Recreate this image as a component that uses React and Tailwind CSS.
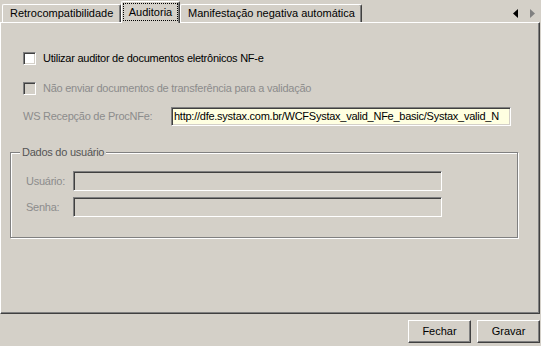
const raised =
  "border-t border-l border-t-white border-l-white border-r border-b border-r-[#404040] border-b-[#404040] shadow-[inset_-1px_-1px_0_#808080]";
const sunken =
  "border-t border-l border-t-[#808080] border-l-[#808080] border-r border-b border-r-white border-b-white shadow-[inset_1px_1px_0_#404040,inset_-1px_-1px_0_#d4d0c8]";

function Tab({ label, active, width }) {
  if (active) {
    return (
      <div
        className={`relative z-10 -mb-px flex h-[22px] items-start justify-center rounded-t-[2px] border-t border-l border-t-white border-l-white border-r border-r-[#404040] bg-[#d4d0c8] pt-[2px] shadow-[inset_-1px_0_0_#808080] ${width}`}
      >
        <span className="px-[5px] leading-[16px] outline-1 outline-dotted outline-black">{label}</span>
      </div>
    );
  }
  return (
    <div
      className={`flex h-[18px] items-center rounded-t-[2px] border-t border-l border-t-white border-l-white border-r border-r-[#404040] bg-[#d4d0c8] pl-[7px] shadow-[inset_-1px_0_0_#808080] ${width}`}
    >
      {label}
    </div>
  );
}

function Checkbox({ label, disabled }) {
  return (
    <label className="flex items-center gap-[7px]">
      <span className={`h-[13px] w-[13px] ${sunken} ${disabled ? "bg-[#d4d0c8]" : "bg-white"}`} />
      <span className={disabled ? "text-[#8c8c8c]" : "text-black"}>{label}</span>
    </label>
  );
}

function Field({ label, height }) {
  return (
    <div className="flex items-center">
      <span className="w-[47px] text-[#8c8c8c]">{label}</span>
      <div className={`w-[369px] bg-[#d4d0c8] ${height} ${sunken}`} />
    </div>
  );
}

export default function App() {
  return (
    <div className="h-[346px] w-[541px] overflow-hidden bg-[#d4d0c8] font-['Liberation_Sans',Arial,sans-serif] text-[11px] leading-[13px] text-black">
      <div className="flex h-[22px] items-end pl-[2px]">
        <Tab label="Retrocompatibilidade" width="w-[119px]" />
        <Tab label="Auditoria" active width="w-[59px]" />
        <Tab label="Manifestação negativa automática" width="w-[182px]" />
        <div className="mb-[4px] ml-auto mr-[6px] flex items-center gap-[12px]">
          <svg width="5" height="9" viewBox="0 0 5 9">
            <path d="M5 0 L0 4.5 L5 9 Z" fill="#000" />
          </svg>
          <svg width="5" height="9" viewBox="0 0 5 9">
            <path d="M0 0 L5 4.5 L0 9 Z" fill="#808080" />
          </svg>
        </div>
      </div>

      <div className="h-[292px] w-[540px] border-t border-l border-t-white border-l-white border-r border-b border-r-[#404040] border-b-[#404040] pl-[9px] tracking-[-0.25px] shadow-[inset_-1px_-1px_0_#808080]">
        <div className="ml-[13px] pt-[29px]">
          <Checkbox label="Utilizar auditor de documentos eletrônicos NF-e" />
        </div>
        <div className="ml-[13px] mt-[17px]">
          <Checkbox label="Não enviar documentos de transferência para a validação" disabled />
        </div>
        <div className="ml-[13px] mt-[12px] flex items-center">
          <span className="w-[148px] text-[#8c8c8c]">WS Recepção de ProcNFe:</span>
          <div className={`h-[19px] w-[340px] overflow-hidden whitespace-nowrap bg-[#ffffe1] pl-[2px] leading-[17px] ${sunken}`}>
            http://dfe.systax.com.br/WCFSystax_valid_NFe_basic/Systax_valid_N
          </div>
        </div>

        <div className="relative mt-[26px] h-[86px] w-[508px] border border-[#808080] pl-[15px] pt-[18px] shadow-[inset_1px_1px_0_#fff,1px_1px_0_#fff]">
          <span className="absolute -top-[7px] left-[9px] bg-[#d4d0c8] px-[2px] text-[#555555]">Dados do usuário</span>
          <Field label="Usuário:" height="h-[20px]" />
          <div className="mt-[6px]">
            <Field label="Senha:" height="h-[20px]" />
          </div>
        </div>
      </div>

      <div className="flex justify-end gap-[6px] pr-[1px] pt-[6px]">
        <button className={`h-[23px] w-[63px] bg-[#d4d0c8] ${raised}`}>Fechar</button>
        <button className={`h-[23px] w-[63px] bg-[#d4d0c8] ${raised}`}>Gravar</button>
      </div>
    </div>
  );
}
